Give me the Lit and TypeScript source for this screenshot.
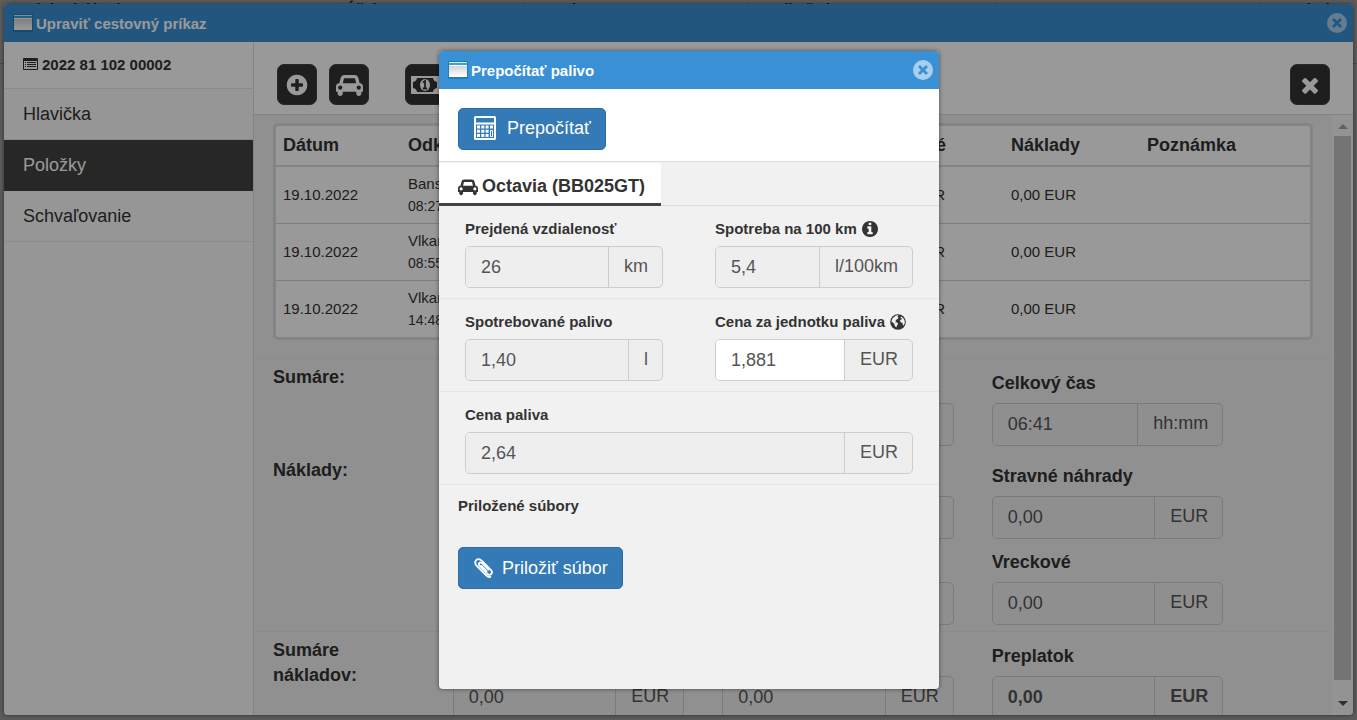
import { LitElement, html, svg, css, nothing } from "lit";
import { customElement, property } from "lit/decorators.js";

const circle =
  "M1664 896q0 209-103 385.5t-279.5 279.5-385.5 103-385.5-103-279.5-279.5-103-385.5 103-385.5 279.5-279.5 385.5-103 385.5 103 279.5 279.5 103 385.5z";
const timesPath =
  "M1490 1322q0 40-28 68l-136 136q-28 28-68 28t-68-28l-294-294-294 294q-28 28-68 28t-68-28l-136-136q-28-28-28-68t28-68l294-294-294-294q-28-28-28-68t28-68l136-136q28-28 68-28t68 28l294 294 294-294q28-28 68-28t68 28l136 136q28 28 28 68t-28 68l-294 294 294 294q28 28 28 68z";

const glyphs: Record<string, { box: string; w: number; h: number; art: unknown }> = {
  plus: {
    box: "0 0 1792 1792", w: 24, h: 24,
    art: svg`<path fill="currentColor" fill-rule="evenodd" d="M1344 960v-128q0-26-19-45t-45-19h-256v-256q0-26-19-45t-45-19h-128q-26 0-45 19t-19 45v256h-256q-26 0-45 19t-19 45v128q0 26 19 45t45 19h256v256q0 26 19 45t45 19h128q26 0 45-19t19-45v-256h256q26 0 45-19t19-45z ${circle}"/>`,
  },
  car: {
    box: "0 0 2048 1792", w: 27, h: 24,
    art: svg`<path fill="currentColor" d="M480 1088q0-66-47-113t-113-47-113 47-47 113 47 113 113 47 113-47 47-113zm36-320h1016l-89-357q-2-8-14-17.500t-21-9.500h-768q-9 0-21 9.500t-14 17.500zm1372 320q0-66-47-113t-113-47-113 47-47 113 47 113 113 47 113-47 47-113zm160-96v384q0 14-9 23t-23 9h-96v128q0 80-56 136t-136 56-136-56-56-136v-128h-1024v128q0 80-56 136t-136 56-136-56-56-136v-128h-96q-14 0-23-9t-9-23v-384q0-93 65.500-158.500t158.500-65.500h28l105-419q23-94 104-157.500t179-63.500h768q98 0 179 63.500t104 157.500l105 419h28q93 0 158.500 65.500t65.500 158.500z"/>`,
  },
  money: {
    box: "0 0 28 18", w: 28, h: 18,
    art: svg`<path fill="currentColor" fill-rule="evenodd" d="M0 0H28V18H0ZM6 2Q5.500 5.500 2 6V12Q5.500 12.500 6 16H22Q22.500 12.500 26 12V6Q22.500 5.500 22 2Z"/>
      <ellipse cx="14" cy="9" rx="5" ry="6" fill="currentColor"/>
      <path d="M12 6.500L14 5V12M11.800 12.500H16.200" fill="none" stroke="#333" stroke-width="1.800"/>`,
  },
  times: { box: "0 0 1792 1792", w: 24, h: 24, art: svg`<path fill="currentColor" d=${timesPath} />` },
  info: {
    box: "128 128 1536 1536", w: 16, h: 16,
    art: svg`<path fill="currentColor" fill-rule="evenodd" d="M1152 1376v-160q0-14-9-23t-23-9h-96v-512q0-14-9-23t-23-9h-320q-14 0-23 9t-9 23v160q0 14 9 23t23 9h96v320h-96q-14 0-23 9t-9 23v160q0 14 9 23t23 9h448q14 0 23-9t9-23zm-128-896v-160q0-14-9-23t-23-9h-192q-14 0-23 9t-9 23v160q0 14 9 23t23 9h192q14 0 23-9t9-23z ${circle}"/>`,
  },
  globe: {
    box: "0 0 16 16", w: 16, h: 16,
    art: svg`<circle cx="8" cy="8" r="7.800" fill="currentColor"/>
      <path fill="#f1f1f1" d="M6 1.400L8.400 1.200L7.600 3L8.600 4L6.800 5.400L5.400 6L6.200 7.200L5 8.200L7.200 8.600L8.200 10L7 11.200L6.400 13.600L4.800 12L4.400 10L2.800 8.400L1.400 7.600L2.400 4.400L4 3ZM11 2.400L13.200 4L14.600 6.400L14.800 9L13.800 11.400L12.600 10.800L12.800 9L11 8.400L9.800 6.800L11 5.400L12.400 5L10.400 3.800Z"/>`,
  },
  calculator: {
    box: "0 0 22 24", w: 22, h: 24,
    art: svg`<path fill="currentColor" fill-rule="evenodd" d="M1.500 0H20.500Q22 0 22 1.500V22.500Q22 24 20.500 24H1.500Q0 24 0 22.500V1.500Q0 0 1.500 0ZM2 2V6.500H20V2ZM2 8.500V22H20V8.500Z"/>
      <path fill="currentColor" d="M3 9.500H6V12.500H3ZM7.300 9.500H10.300V12.500H7.300ZM11.600 9.500H14.600V12.500H11.600ZM16 9.500H19V12.500H16ZM3 13.700H6V16.700H3ZM7.300 13.700H10.300V16.700H7.300ZM11.600 13.700H14.600V16.700H11.600ZM3 18H6V21H3ZM7.300 18H10.300V21H7.300ZM11.600 18H14.600V21H11.600Z"/>
      <path fill="none" stroke="currentColor" d="M16.500 14.500H18.500V20.500H16.500Z"/>`,
  },
  clip: {
    box: "0 0 20 20", w: 20, h: 20,
    art: svg`<path fill="none" stroke="currentColor" stroke-width="1.800" stroke-linecap="round" stroke-linejoin="round" d="M14.500 11.500L8.200 5.200Q6.500 3.800 5.300 5Q4.200 6.200 5.600 7.700L13.200 15.600Q15.500 17.800 17.300 16Q19 14 16.800 11.800L8 2.900Q4.600 -0.300 2.200 2.100Q-0.200 4.600 2.900 8L12.400 17.600Q14.400 19.500 16.300 18.800M12.600 13.200L7.500 8"/>`,
  },
  list: {
    box: "0 0 15 12", w: 15, h: 12,
    art: svg`<path fill="currentColor" fill-rule="evenodd" d="M1 0H14Q15 0 15 1V11Q15 12 14 12H1Q0 12 0 11V1Q0 0 1 0ZM1 3V11H14V3Z"/>
      <path fill="currentColor" d="M2 4H3V5H2ZM4 4H13V5H4ZM2 6H3V7H2ZM4 6H13V7H4ZM2 8H3V9H2ZM4 8H13V9H4Z"/>`,
  },
  close: {
    box: "0 0 20 20", w: 20, h: 20,
    art: svg`<circle cx="10" cy="10" r="10" fill="#a9cfee"/><path d="M6 6L14 14M14 6L6 14" stroke="#3990d4" stroke-width="2.800"/>`,
  },
  window: {
    box: "0 0 20 18", w: 20, h: 18,
    art: svg`<defs><linearGradient id="pane" x1="0" y1="0" x2="0" y2="1"><stop offset="0" stop-color="#d4d4d4"/><stop offset="1" stop-color="#fff"/></linearGradient></defs>
      <rect width="20" height="18" rx="1" fill="#1b7fb5"/><rect x="1" y="1" width="18" height="4" fill="#3da0d8"/><rect x="1" y="1" width="18" height="1" fill="#d8eef9"/><rect x="1" y="5" width="18" height="11" fill="url(#pane)"/><rect x="1" y="4" width="18" height="1" fill="#fff"/>`,
  },
};

@customElement("ui-icon")
export class UiIcon extends LitElement {
  @property() name = "";
  @property({ type: Number }) size = 0;
  static styles = css`
    :host { display: inline-flex; flex: none; }
    svg { display: block; }
  `;
  render() {
    const g = glyphs[this.name];
    if (!g) return nothing;
    const h = this.size || g.h;
    return html`<svg width=${Math.round((g.w * h) / g.h)} height=${h} viewBox=${g.box} aria-hidden="true">${g.art}</svg>`;
  }
}

@customElement("unit-field")
export class UnitField extends LitElement {
  @property() label = "";
  @property() value = "";
  @property() unit = "";
  @property() icon = "";
  @property({ type: Boolean }) editable = false;
  @property({ type: Boolean, reflect: true }) compact = false;
  @property({ type: Boolean, reflect: true }) strong = false;
  static styles = css`
    :host { display: flex; flex-direction: column; gap: 7px; min-width: 0; font-family: "Liberation Sans", Arial, sans-serif; font-size: 18px; color: #333; }
    label { display: flex; align-items: center; gap: 5px; line-height: 25px; font-weight: bold; white-space: nowrap; }
    .group { display: flex; height: 43px; box-sizing: border-box; border: 1px solid #ccc; border-radius: 5px; background: #eee; color: #555; overflow: hidden; }
    input { flex: 1; min-width: 0; width: 0; border: 0; padding: 0 15px; margin: 0; background: #eee; color: #555; font: inherit; outline: none; }
    input.editable { background: #fff; }
    .unit { border-left: 1px solid #ccc; padding: 0 14px 0 15px; line-height: 39px; }
    :host([compact]) { gap: 6px; }
    :host([compact]) label { font-size: 15px; line-height: 22px; }
    :host([compact]) .group { height: 42px; }
    :host([strong]) .group { font-weight: bold; }
  `;
  render() {
    return html`
      <label for="v">${this.label}${this.icon ? html`<ui-icon name=${this.icon}></ui-icon>` : nothing}</label>
      <div class="group">
        <input id="v" class=${this.editable ? "editable" : ""} .value=${this.value} ?readonly=${!this.editable} />
        <span class="unit">${this.unit}</span>
      </div>`;
  }
}

const trips = [
  { date: "19.10.2022", from: "Banská Bystrica", time: "08:27" },
  { date: "19.10.2022", from: "Vlkanová", time: "08:55" },
  { date: "19.10.2022", from: "Vlkanová", time: "14:48" },
];

@customElement("app-root")
export class AppRoot extends LitElement {
  static styles = css`
    :host { display: block; position: relative; height: 100vh; overflow: hidden; background: #fff; font-family: "Liberation Sans", Arial, sans-serif; font-size: 18px; color: #333; }
    * { box-sizing: border-box; }
    button { font: inherit; margin: 0; cursor: pointer; }
    a { color: inherit; text-decoration: none; }

    .backpage { display: grid; grid-template-columns: 322fr 187fr 223fr 248fr 265fr 97fr; height: 64px; padding-left: 15px; border-bottom: 1px solid #ccc; font-size: 15px; font-weight: bold; line-height: 17px; }
    .backpage span { border-left: 1px dotted #ddd; padding-left: 7px; }

    .veil { position: absolute; inset: 0; display: flex; background: rgba(0, 0, 0, 0.4); }
    .outer { padding: 4px 4px 5px; }
    .inner { padding: 20px 0 0 21px; align-items: center; justify-content: center; }

    .dialog { display: flex; flex-direction: column; border-radius: 4px; overflow: hidden; background: #f1f1f1; box-shadow: 0 0 4px rgba(0, 0, 0, 0.5); }
    .outer > .dialog { flex: 1; min-width: 0; }
    .inner > .dialog { width: 500px; min-height: 638px; }
    .titlebar { flex: none; display: flex; align-items: center; gap: 3px; height: 38px; padding: 0 6px 0 9px; background: #3990d4; color: #fff; font-size: 15px; font-weight: bold; }
    .titlebar h1 { flex: 1; margin: 0; padding-top: 2px; font-size: 15px; line-height: 36px; }
    .plain { padding: 0; border: 0; background: none; display: flex; }

    .body { flex: 1; display: flex; min-height: 0; }
    .side { flex: none; width: 250px; border-right: 1px solid #ddd; background: #fafafa; }
    .docno { display: flex; align-items: center; gap: 4px; height: 47px; padding: 0 19px 2px; border-bottom: 1px solid #e8e8e8; background: #fff; font-size: 15px; font-weight: bold; }
    .side a { display: block; height: 51px; padding: 0 19px; border-bottom: 1px solid #e8e8e8; line-height: 50px; }
    .side a.active { background: #424242; border-color: #424242; color: #fff; }

    .main { flex: 1; min-width: 0; display: flex; flex-direction: column; }
    .tools { flex: none; display: flex; gap: 12px; height: 73px; padding: 22px 23px 0; border-bottom: 1px solid #ddd; background: #fff; }
    .tool { display: flex; align-items: center; justify-content: center; width: 40px; height: 41px; padding: 0; border: 1px solid #444; border-radius: 7px; background: #333; color: #fff; }
    .spaced { margin-left: 24px; }
    .last { margin-left: auto; }

    .view { flex: 1; display: flex; min-height: 0; }
    .scroller { flex: 1; min-width: 0; overflow: hidden; }
    .bar { flex: none; width: 21px; display: flex; flex-direction: column; align-items: center; padding: 9px 2px 9px; background: #f6f6f6; }
    .thumb { flex: 1; width: 100%; margin: 7px 0 21px; background: #c1c1c1; }
    .arrow { border: 5px solid transparent; }
    .up { border-top: 0; border-bottom-color: #a3a3a3; }
    .down { border-bottom: 0; border-top-color: #505050; }

    .frame { margin: 8px 19px 18px; border: 3px solid #ddd; border-radius: 5px; background: #fff; overflow: hidden; }
    table { width: 100%; border-collapse: collapse; table-layout: fixed; font-size: 15px; }
    th, td { padding: 0 0 0 7px; text-align: left; white-space: nowrap; }
    th { height: 40px; border-bottom: 2px solid #ddd; font-size: 18px; }
    td { height: 57px; line-height: 22px; }
    tr + tr td { border-top: 1px solid #d0d0d0; }
    small { display: block; font-size: 14px; }
    .c1, .c2 { width: 125px; }
    .c4 { width: 131px; }
    .c5 { width: 136px; }
    .c6 { width: 170px; }

    .sum { display: grid; grid-template-columns: 2fr 3fr 3fr 3fr 1fr; padding: 6px 0; }
    .ruled { border-top: 1px solid #e8e8e8; }
    .sum h2 { margin: 0; padding: 0 19px; font-size: 18px; line-height: 25px; }
    .col { display: flex; flex-direction: column; gap: 11px; padding: 6px 19px 0; min-width: 0; }
    .c-a { grid-column: 2; }
    .c-b { grid-column: 3; }
    .c-c { grid-column: 4; }

    .actions { flex: none; padding: 19px; height: 73px; border-bottom: 1px solid #ddd; background: #fff; }
    .primary { display: flex; align-items: center; height: 42px; padding: 0 14px 0 15px; border: 1px solid #2e6da4; border-radius: 5px; background: #337ab7; color: #fff; line-height: 24px; }
    .calc { gap: 11px; padding-bottom: 2px; }
    .attach { gap: 8px; }
    .tabs { flex: none; display: flex; align-items: flex-end; height: 44px; border-bottom: 1px solid #ddd; }
    .tab { display: flex; align-items: center; gap: 4px; height: 43px; padding: 7px 16px 0 19px; margin-bottom: -1px; border: 0; border-bottom: 3px solid #444; border-radius: 4px 4px 0 0; background: #fff; color: #333; font-weight: bold; }
    .row { display: grid; grid-template-columns: 1fr 1fr; column-gap: 52px; padding: 12px 26px 10px; border-bottom: 1px solid #e6e6e6; }
    .wide { grid-column: 1 / -1; }
    .files { display: flex; flex-direction: column; align-items: flex-start; gap: 30px; padding: 10px 19px; }
    .files h2 { margin: 0; font-size: 15px; line-height: 22px; }
  `;

  private titlebar(text: string) {
    return html`<header class="titlebar">
      <ui-icon name="window"></ui-icon>
      <h1>${text}</h1>
      <button class="plain" aria-label="Zavrieť"><ui-icon name="close"></ui-icon></button>
    </header>`;
  }

  private field(label: string, value: string, unit: string, strong = false) {
    return html`<unit-field label=${label} value=${value} unit=${unit} ?strong=${strong}></unit-field>`;
  }

  render() {
    return html`
      <div class="backpage">
        <span>Východzí bod</span><span>Účel cesty</span><span>Trvanie</span><span>Predbežné</span><span>Stav</span><span>Poznámka</span>
      </div>
      <div class="veil outer">
        <section class="dialog">
          ${this.titlebar("Upraviť cestovný príkaz")}
          <div class="body">
            <nav class="side">
              <div class="docno"><ui-icon name="list"></ui-icon>2022 81 102 00002</div>
              <a href="#hlavicka">Hlavička</a>
              <a href="#polozky" class="active">Položky</a>
              <a href="#schvalovanie">Schvaľovanie</a>
            </nav>
            <div class="main">
              <div class="tools">
                <button class="tool" aria-label="Pridať"><ui-icon name="plus"></ui-icon></button>
                <button class="tool" aria-label="Auto"><ui-icon name="car"></ui-icon></button>
                <button class="tool spaced" aria-label="Náklady"><ui-icon name="money"></ui-icon></button>
                <button class="tool last" aria-label="Zrušiť"><ui-icon name="times"></ui-icon></button>
              </div>
              <div class="view">
                <div class="scroller">
                  <div class="frame">
                    <table>
                      <colgroup><col class="c1" /><col class="c2" /><col /><col class="c4" /><col class="c5" /><col class="c6" /></colgroup>
                      <thead>
                        <tr><th>Dátum</th><th>Odkiaľ</th><th></th><th>Stravné</th><th>Náklady</th><th>Poznámka</th></tr>
                      </thead>
                      <tbody>
                        ${trips.map(
                          (t) => html`<tr><td>${t.date}</td><td>${t.from}<small>${t.time}</small></td><td></td><td>0,00 EUR</td><td>0,00 EUR</td><td></td></tr>`
                        )}
                      </tbody>
                    </table>
                  </div>
                  <div class="sum ruled">
                    <h2>Sumáre:</h2>
                    <div class="col c-b">${this.field("Vzdialenosť", "26", "km")}</div>
                    <div class="col c-c">${this.field("Celkový čas", "06:41", "hh:mm")}</div>
                  </div>
                  <div class="sum">
                    <h2>Náklady:</h2>
                    <div class="col c-b">${this.field("Cestovné", "0,00", "EUR")}${this.field("Nocľažné", "0,00", "EUR")}</div>
                    <div class="col c-c">${this.field("Stravné náhrady", "0,00", "EUR")}${this.field("Vreckové", "0,00", "EUR")}</div>
                  </div>
                  <div class="sum ruled">
                    <h2>Sumáre nákladov:</h2>
                    <div class="col c-a">${this.field("Celkom", "0,00", "EUR")}</div>
                    <div class="col c-b">${this.field("Záloha", "0,00", "EUR")}</div>
                    <div class="col c-c">${this.field("Preplatok", "0,00", "EUR", true)}</div>
                  </div>
                </div>
                <div class="bar"><i class="arrow up"></i><i class="thumb"></i><i class="arrow down"></i></div>
              </div>
            </div>
          </div>
        </section>
      </div>
      <div class="veil inner">
        <section class="dialog">
          ${this.titlebar("Prepočítať palivo")}
          <div class="actions">
            <button class="primary calc"><ui-icon name="calculator"></ui-icon>Prepočítať</button>
          </div>
          <div class="tabs">
            <button class="tab"><ui-icon name="car" size="18"></ui-icon>Octavia (BB025GT)</button>
          </div>
          <div class="row">
            <unit-field compact label="Prejdená vzdialenosť" value="26" unit="km"></unit-field>
            <unit-field compact label="Spotreba na 100 km" value="5,4" unit="l/100km" icon="info"></unit-field>
          </div>
          <div class="row">
            <unit-field compact label="Spotrebované palivo" value="1,40" unit="l"></unit-field>
            <unit-field compact editable label="Cena za jednotku paliva" value="1,881" unit="EUR" icon="globe"></unit-field>
          </div>
          <div class="row">
            <unit-field compact class="wide" label="Cena paliva" value="2,64" unit="EUR"></unit-field>
          </div>
          <div class="files">
            <h2>Priložené súbory</h2>
            <button class="primary attach"><ui-icon name="clip"></ui-icon>Priložiť súbor</button>
          </div>
        </section>
      </div>
    `;
  }
}
